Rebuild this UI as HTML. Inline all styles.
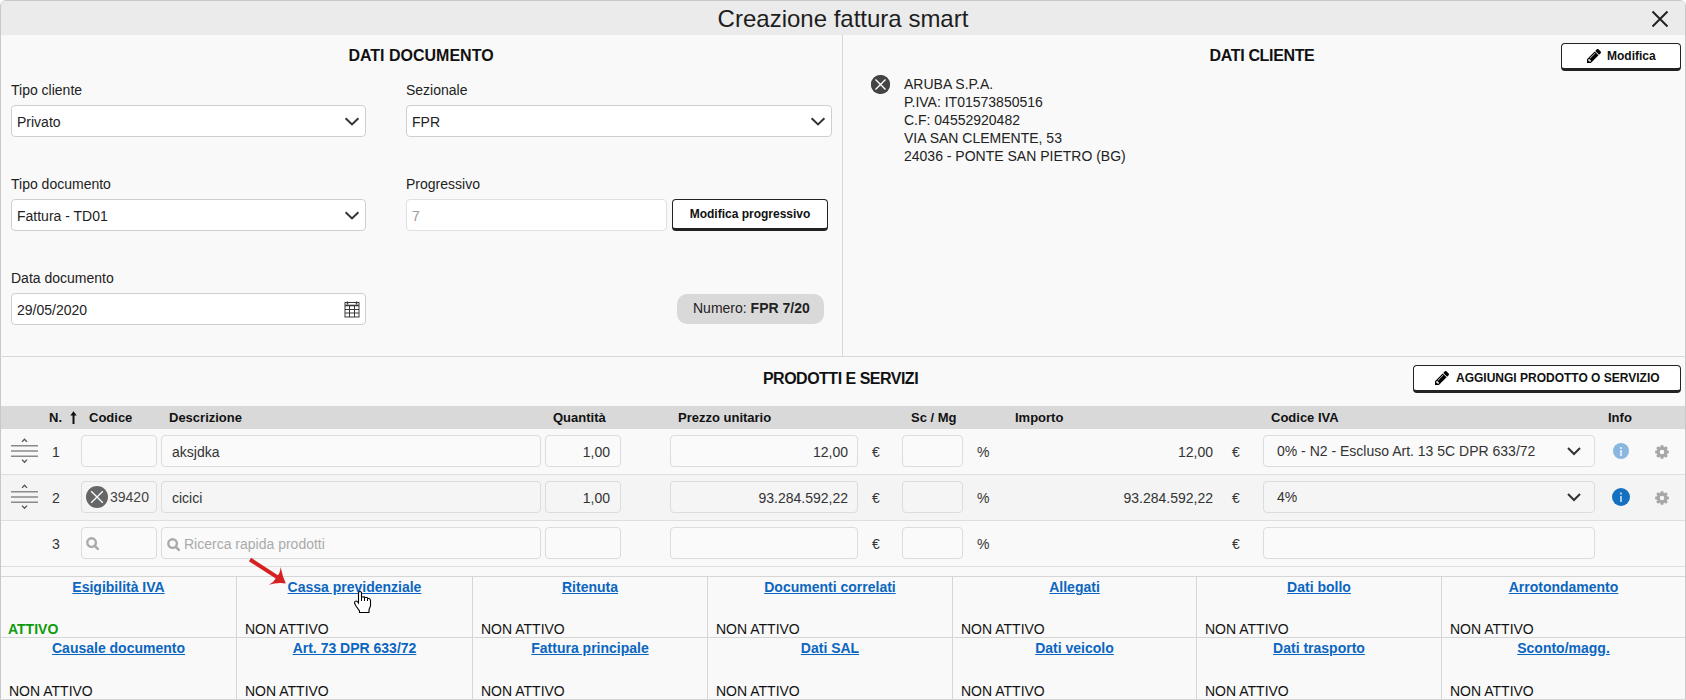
<!DOCTYPE html>
<html><head><meta charset="utf-8">
<style>
*{box-sizing:border-box;margin:0;padding:0}
html,body{width:1686px;height:700px;overflow:hidden;background:#fff;font-family:"Liberation Sans",sans-serif;color:#222}
.a{position:absolute}
#modal{position:absolute;left:0;top:0;width:1686px;height:712px;border:1px solid #c8c8c8;border-radius:6px;background:#f9f9f9;overflow:hidden}
#hdr{position:absolute;left:0;top:0;width:1684px;height:34px;background:#ebebeb}
.t14{font-size:14px;line-height:16px;white-space:nowrap}
.lbl{position:absolute;font-size:14px;line-height:16px;color:#222;white-space:nowrap}
.inp{position:absolute;height:32px;background:#fff;border:1px solid #cfcfcf;border-radius:4px}
.h16{position:absolute;font-size:16px;line-height:18px;font-weight:bold;color:#111;white-space:nowrap}
.chev{position:absolute;width:16px;height:10px}
.btn{position:absolute;background:#fff;border:1px solid #222;border-bottom:3px solid #222;border-radius:4px;font-weight:bold;font-size:12px;color:#111;text-align:center;white-space:nowrap}
.lk{text-align:center;font-weight:bold;color:#0b66c0;text-decoration:underline}
</style></head><body>
<div id="modal"><div id="hdr"></div></div>
<!-- title -->
<div class="a" style="left:0;top:5px;width:1686px;text-align:center;font-size:24px;line-height:28px;color:#1e1e1e">Creazione fattura smart</div>
<!-- close X -->
<svg class="a" style="left:1650px;top:9px" width="20" height="20" viewBox="0 0 20 20"><path d="M2.5 2.5L17.5 17.5M17.5 2.5L2.5 17.5" stroke="#222" stroke-width="2" fill="none"/></svg>

<!-- vertical divider -->
<div class="a" style="left:842px;top:35px;width:1px;height:321px;background:#d8d8d8"></div>
<div class="a" style="left:0;top:356px;width:1686px;height:1px;background:#d8d8d8"></div>

<!-- DATI DOCUMENTO -->
<div class="h16" style="left:0;width:842px;text-align:center;top:47px">DATI DOCUMENTO</div>
<div class="lbl" style="left:11px;top:82px">Tipo cliente</div>
<div class="inp" style="left:11px;top:105px;width:355px"></div>
<div class="lbl" style="left:17px;top:114px">Privato</div>
<div class="lbl" style="left:406px;top:82px">Sezionale</div>
<div class="inp" style="left:406px;top:105px;width:426px"></div>
<div class="lbl" style="left:412px;top:114px">FPR</div>

<div class="lbl" style="left:11px;top:176px">Tipo documento</div>
<div class="inp" style="left:11px;top:199px;width:355px"></div>
<div class="lbl" style="left:17px;top:208px">Fattura - TD01</div>
<div class="lbl" style="left:406px;top:176px">Progressivo</div>
<div class="inp" style="left:406px;top:199px;width:261px;border-color:#e0e0e0"></div>
<div class="lbl" style="left:412px;top:208px;color:#999">7</div>
<div class="btn" style="left:672px;top:199px;width:156px;height:32px;line-height:28px">Modifica progressivo</div>

<div class="lbl" style="left:11px;top:270px">Data documento</div>
<div class="inp" style="left:11px;top:293px;width:355px"></div>
<div class="lbl" style="left:17px;top:302px">29/05/2020</div>
<div class="a" style="left:677px;top:294px;width:147px;height:30px;background:#d9d9d9;border-radius:10px"></div>
<div class="lbl" style="left:693px;top:300px">Numero: <b>FPR 7/20</b></div>

<!-- DATI CLIENTE -->
<div class="h16" style="left:843px;width:838px;text-align:center;top:47px;letter-spacing:-0.35px">DATI CLIENTE</div>
<div class="btn" style="left:1561px;top:43px;width:120px;height:28px;line-height:24px;text-align:left;padding-left:45px">Modifica</div>
<div class="a" style="left:871px;top:75px;width:19px;height:19px;border-radius:50%;background:#444"></div>
<div class="lbl" style="left:904px;top:75px;line-height:18px">ARUBA S.P.A.<br>P.IVA: IT01573850516<br>C.F: 04552920482<br>VIA SAN CLEMENTE, 53<br>24036 - PONTE SAN PIETRO (BG)</div>

<!-- PRODOTTI E SERVIZI -->
<div class="h16" style="left:0;width:1681px;text-align:center;top:370px;letter-spacing:-0.5px">PRODOTTI E SERVIZI</div>
<div class="btn" style="left:1413px;top:365px;width:268px;height:28px;line-height:24px;text-align:left;padding-left:42px">AGGIUNGI PRODOTTO O SERVIZIO</div>
<div class="a" style="left:1px;top:406px;width:1684px;height:23px;background:#d9d9d9"></div>

<div class="lbl" style="left:49px;top:410px;font-size:13px;font-weight:bold;color:#111">N.</div>
<div class="lbl" style="left:89px;top:410px;font-size:13px;font-weight:bold;color:#111">Codice</div>
<div class="lbl" style="left:169px;top:410px;font-size:13px;font-weight:bold;color:#111">Descrizione</div>
<div class="lbl" style="left:553px;top:410px;font-size:13px;font-weight:bold;color:#111">Quantit&agrave;</div>
<div class="lbl" style="left:678px;top:410px;font-size:13px;font-weight:bold;color:#111">Prezzo unitario</div>
<div class="lbl" style="left:911px;top:410px;font-size:13px;font-weight:bold;color:#111">Sc / Mg</div>
<div class="lbl" style="left:1015px;top:410px;font-size:13px;font-weight:bold;color:#111">Importo</div>
<div class="lbl" style="left:1271px;top:410px;font-size:13px;font-weight:bold;color:#111">Codice IVA</div>
<div class="lbl" style="left:1608px;top:410px;font-size:13px;font-weight:bold;color:#111">Info</div>
<svg class="a" style="left:70px;top:411px" width="7" height="13" viewBox="0 0 7 13"><path d="M3.5 3V13" stroke="#111" stroke-width="2"/><path d="M0.3 4.5L3.5 0.3L6.7 4.5Z" fill="#111"/></svg>
<div class="a" style="left:1px;top:429px;width:1684px;height:46px;background:#f9f9f9"></div>
<div class="a" style="left:1px;top:474px;width:1684px;height:1px;background:#dedede"></div>
<svg class="a" style="left:11px;top:438px" width="28" height="26" viewBox="0 0 28 26"><path d="M0 7.65H27M0 12.9H27M0 18.15H27" stroke="#8a8a8a" stroke-width="1.5"/><path d="M11 3.9L13.5 1.2L16 3.9M11 21.6L13.5 24.3L16 21.6" stroke="#555" stroke-width="1.3" fill="none"/></svg>
<div class="lbl" style="left:52px;top:444px;color:#333;">1</div>
<div class="inp" style="left:81px;top:435px;width:76px;background:#fafafa;border-color:#dcdcdc"></div>
<div class="inp" style="left:161px;top:435px;width:380px;background:#fafafa;border-color:#dcdcdc"></div>
<div class="inp" style="left:545px;top:435px;width:76px;background:#fafafa;border-color:#dcdcdc"></div>
<div class="inp" style="left:670px;top:435px;width:188px;background:#fafafa;border-color:#dcdcdc"></div>
<div class="lbl" style="left:872px;top:444px;color:#333;">&euro;</div>
<div class="inp" style="left:902px;top:435px;width:61px;background:#fafafa;border-color:#dcdcdc"></div>
<div class="lbl" style="left:977px;top:444px;color:#333;">%</div>
<div class="lbl" style="left:1232px;top:444px;color:#333;">&euro;</div>
<div class="inp" style="left:1263px;top:435px;width:332px;background:#fafafa;border-color:#dcdcdc"></div>
<div class="a" style="left:1px;top:475px;width:1684px;height:46px;background:#f4f4f4"></div>
<div class="a" style="left:1px;top:520px;width:1684px;height:1px;background:#dedede"></div>
<svg class="a" style="left:11px;top:484px" width="28" height="26" viewBox="0 0 28 26"><path d="M0 7.65H27M0 12.9H27M0 18.15H27" stroke="#8a8a8a" stroke-width="1.5"/><path d="M11 3.9L13.5 1.2L16 3.9M11 21.6L13.5 24.3L16 21.6" stroke="#555" stroke-width="1.3" fill="none"/></svg>
<div class="lbl" style="left:52px;top:490px;color:#333;">2</div>
<div class="inp" style="left:81px;top:481px;width:76px;background:#f5f5f5;border-color:#dcdcdc"></div>
<div class="inp" style="left:161px;top:481px;width:380px;background:#f5f5f5;border-color:#dcdcdc"></div>
<div class="inp" style="left:545px;top:481px;width:76px;background:#f5f5f5;border-color:#dcdcdc"></div>
<div class="inp" style="left:670px;top:481px;width:188px;background:#f5f5f5;border-color:#dcdcdc"></div>
<div class="lbl" style="left:872px;top:490px;color:#333;">&euro;</div>
<div class="inp" style="left:902px;top:481px;width:61px;background:#f5f5f5;border-color:#dcdcdc"></div>
<div class="lbl" style="left:977px;top:490px;color:#333;">%</div>
<div class="lbl" style="left:1232px;top:490px;color:#333;">&euro;</div>
<div class="inp" style="left:1263px;top:481px;width:332px;background:#f5f5f5;border-color:#dcdcdc"></div>
<div class="a" style="left:1px;top:521px;width:1684px;height:46px;background:#f9f9f9"></div>
<div class="a" style="left:1px;top:566px;width:1684px;height:1px;background:#dedede"></div>
<div class="lbl" style="left:52px;top:536px;color:#333;">3</div>
<div class="inp" style="left:81px;top:527px;width:76px;background:#fafafa;border-color:#dcdcdc"></div>
<div class="inp" style="left:161px;top:527px;width:380px;background:#fafafa;border-color:#dcdcdc"></div>
<div class="inp" style="left:545px;top:527px;width:76px;background:#fafafa;border-color:#dcdcdc"></div>
<div class="inp" style="left:670px;top:527px;width:188px;background:#fafafa;border-color:#dcdcdc"></div>
<div class="lbl" style="left:872px;top:536px;color:#333;">&euro;</div>
<div class="inp" style="left:902px;top:527px;width:61px;background:#fafafa;border-color:#dcdcdc"></div>
<div class="lbl" style="left:977px;top:536px;color:#333;">%</div>
<div class="lbl" style="left:1232px;top:536px;color:#333;">&euro;</div>
<div class="inp" style="left:1263px;top:527px;width:332px;background:#fafafa;border-color:#dcdcdc"></div>
<div class="lbl" style="left:310px;width:300px;text-align:right;top:444px;color:#333">1,00</div>
<div class="lbl" style="left:548px;width:300px;text-align:right;top:444px;color:#333">12,00</div>
<div class="lbl" style="left:913px;width:300px;text-align:right;top:444px;color:#333">12,00</div>
<div class="lbl" style="left:172px;top:444px;color:#333;">aksjdka</div>
<div class="lbl" style="left:1277px;top:443px;color:#333;">0% - N2 - Escluso Art. 13 5C DPR 633/72</div>
<div class="lbl" style="left:310px;width:300px;text-align:right;top:490px;color:#333">1,00</div>
<div class="lbl" style="left:548px;width:300px;text-align:right;top:490px;color:#333">93.284.592,22</div>
<div class="lbl" style="left:913px;width:300px;text-align:right;top:490px;color:#333">93.284.592,22</div>
<div class="lbl" style="left:172px;top:490px;color:#333;">cicici</div>
<div class="lbl" style="left:1277px;top:489px;color:#333;">4%</div>
<div class="lbl" style="left:110px;top:489px;color:#444;">39420</div>
<div class="lbl" style="left:184px;top:536px;color:#aaa;">Ricerca rapida prodotti</div>
<svg class="a" style="left:1567px;top:447px" width="14" height="9" viewBox="0 0 14 9"><path d="M1 1L7 7L13 1" stroke="#333" stroke-width="2" fill="none"/></svg>
<svg class="a" style="left:1567px;top:493px" width="14" height="9" viewBox="0 0 14 9"><path d="M1 1L7 7L13 1" stroke="#333" stroke-width="2" fill="none"/></svg>
<svg class="a" style="left:86px;top:486px" width="22" height="22" viewBox="0 0 22 22"><circle cx="11" cy="11" r="11" fill="#666"/><path d="M5.2 5.2L16.8 16.8M16.8 5.2L5.2 16.8" stroke="#fff" stroke-width="1.3"/></svg>
<svg class="a" style="left:86px;top:537px" width="14" height="14" viewBox="0 0 14 14"><circle cx="5.6" cy="5.6" r="4.3" stroke="#aaa" stroke-width="2.4" fill="none"/><path d="M8.8 8.8L11.8 11.8" stroke="#aaa" stroke-width="2.6" stroke-linecap="round"/></svg>
<svg class="a" style="left:167px;top:538px" width="14" height="14" viewBox="0 0 14 14"><circle cx="5.6" cy="5.6" r="4.3" stroke="#aaa" stroke-width="2.4" fill="none"/><path d="M8.8 8.8L11.8 11.8" stroke="#aaa" stroke-width="2.6" stroke-linecap="round"/></svg>
<svg class="a" style="left:1613px;top:443px" width="16" height="16" viewBox="0 0 16 16"><circle cx="8" cy="8" r="8" fill="#8ab7df"/><rect x="7" y="7" width="2" height="6" fill="#d9e8f5"/><rect x="7" y="4" width="2" height="2" fill="#d9e8f5"/></svg>
<svg class="a" style="left:1612px;top:488px" width="18" height="18" viewBox="0 0 18 18"><circle cx="9" cy="9" r="9" fill="#1570bf"/><rect x="8" y="8" width="2" height="6" fill="#a8cbe9"/><rect x="8" y="4.5" width="2" height="2" fill="#a8cbe9"/></svg>
<svg class="a" style="left:1655px;top:445px" width="14" height="14" viewBox="0 0 14 14"><path fill="#a6a6a6" fill-rule="evenodd" d="M5.01 2.20 L5.33 2.08 L5.66 0.13 L8.34 0.13 L8.67 2.08 L8.99 2.20 L9.30 2.34 L10.91 1.19 L12.81 3.09 L11.66 4.70 L11.80 5.01 L11.92 5.33 L13.87 5.66 L13.87 8.34 L11.92 8.67 L11.80 8.99 L11.66 9.30 L12.81 10.91 L10.91 12.81 L9.30 11.66 L8.99 11.80 L8.67 11.92 L8.34 13.87 L5.66 13.87 L5.33 11.92 L5.01 11.80 L4.70 11.66 L3.09 12.81 L1.19 10.91 L2.34 9.30 L2.20 8.99 L2.08 8.67 L0.13 8.34 L0.13 5.66 L2.08 5.33 L2.20 5.01 L2.34 4.70 L1.19 3.09 L3.09 1.19 L4.70 2.34Z M9.30 7 A2.3 2.3 0 1 0 4.70 7 A2.3 2.3 0 1 0 9.30 7Z"/></svg>
<svg class="a" style="left:1655px;top:491px" width="14" height="14" viewBox="0 0 14 14"><path fill="#a6a6a6" fill-rule="evenodd" d="M5.01 2.20 L5.33 2.08 L5.66 0.13 L8.34 0.13 L8.67 2.08 L8.99 2.20 L9.30 2.34 L10.91 1.19 L12.81 3.09 L11.66 4.70 L11.80 5.01 L11.92 5.33 L13.87 5.66 L13.87 8.34 L11.92 8.67 L11.80 8.99 L11.66 9.30 L12.81 10.91 L10.91 12.81 L9.30 11.66 L8.99 11.80 L8.67 11.92 L8.34 13.87 L5.66 13.87 L5.33 11.92 L5.01 11.80 L4.70 11.66 L3.09 12.81 L1.19 10.91 L2.34 9.30 L2.20 8.99 L2.08 8.67 L0.13 8.34 L0.13 5.66 L2.08 5.33 L2.20 5.01 L2.34 4.70 L1.19 3.09 L3.09 1.19 L4.70 2.34Z M9.30 7 A2.3 2.3 0 1 0 4.70 7 A2.3 2.3 0 1 0 9.30 7Z"/></svg>
<div class="a" style="left:1px;top:566px;width:1684px;height:1px;background:#dedede"></div>
<div class="a" style="left:1px;top:576px;width:1684px;height:1px;background:#d6d6d6"></div>
<div class="a" style="left:1px;top:637px;width:1684px;height:1px;background:#d6d6d6"></div>
<div class="a" style="left:236px;top:577px;width:1px;height:130px;background:#d6d6d6"></div>
<div class="a" style="left:472px;top:577px;width:1px;height:130px;background:#d6d6d6"></div>
<div class="a" style="left:707px;top:577px;width:1px;height:130px;background:#d6d6d6"></div>
<div class="a" style="left:952px;top:577px;width:1px;height:130px;background:#d6d6d6"></div>
<div class="a" style="left:1196px;top:577px;width:1px;height:130px;background:#d6d6d6"></div>
<div class="a" style="left:1441px;top:577px;width:1px;height:130px;background:#d6d6d6"></div>
<div class="lbl lk" style="left:1px;width:235px;top:579px">Esigibilit&agrave; IVA</div>
<div class="lbl lk" style="left:1px;width:235px;top:640px">Causale documento</div>
<div class="lbl" style="left:8px;top:621px;color:#111"><span style="color:#0e9a0e;font-weight:bold">ATTIVO</span></div>
<div class="lbl" style="left:9px;top:683px;color:#111">NON ATTIVO</div>
<div class="lbl lk" style="left:237px;width:235px;top:579px">Cassa previdenziale</div>
<div class="lbl lk" style="left:237px;width:235px;top:640px">Art. 73 DPR 633/72</div>
<div class="lbl" style="left:245px;top:621px;color:#111">NON ATTIVO</div>
<div class="lbl" style="left:245px;top:683px;color:#111">NON ATTIVO</div>
<div class="lbl lk" style="left:473px;width:234px;top:579px">Ritenuta</div>
<div class="lbl lk" style="left:473px;width:234px;top:640px">Fattura principale</div>
<div class="lbl" style="left:481px;top:621px;color:#111">NON ATTIVO</div>
<div class="lbl" style="left:481px;top:683px;color:#111">NON ATTIVO</div>
<div class="lbl lk" style="left:708px;width:244px;top:579px">Documenti correlati</div>
<div class="lbl lk" style="left:708px;width:244px;top:640px">Dati SAL</div>
<div class="lbl" style="left:716px;top:621px;color:#111">NON ATTIVO</div>
<div class="lbl" style="left:716px;top:683px;color:#111">NON ATTIVO</div>
<div class="lbl lk" style="left:953px;width:243px;top:579px">Allegati</div>
<div class="lbl lk" style="left:953px;width:243px;top:640px">Dati veicolo</div>
<div class="lbl" style="left:961px;top:621px;color:#111">NON ATTIVO</div>
<div class="lbl" style="left:961px;top:683px;color:#111">NON ATTIVO</div>
<div class="lbl lk" style="left:1197px;width:244px;top:579px">Dati bollo</div>
<div class="lbl lk" style="left:1197px;width:244px;top:640px">Dati trasporto</div>
<div class="lbl" style="left:1205px;top:621px;color:#111">NON ATTIVO</div>
<div class="lbl" style="left:1205px;top:683px;color:#111">NON ATTIVO</div>
<div class="lbl lk" style="left:1442px;width:243px;top:579px">Arrotondamento</div>
<div class="lbl lk" style="left:1442px;width:243px;top:640px">Sconto/magg.</div>
<div class="lbl" style="left:1450px;top:621px;color:#111">NON ATTIVO</div>
<div class="lbl" style="left:1450px;top:683px;color:#111">NON ATTIVO</div>
<svg class="a" style="left:240px;top:550px" width="60" height="45" viewBox="240 550 60 45"><path d="M251.1 557.8L277.9 575.2Q280.3 572.5 280.6 566.9Q282.4 575.8 285.8 583.5Q277.4 582.2 268.9 584.8Q273.8 582.3 275.7 578.6L248.9 561.2Z" fill="#d42222"/></svg>
<svg class="a" style="left:353px;top:590px" width="20" height="25" viewBox="-1 -1 20 25"><path d="M4.5 1.5Q6 -0.5 7.5 1.5V6H9.5Q10.5 5.5 11 6.5H12.5Q13.5 6.5 14 7.5H15Q16.5 8 16.5 9.5V15L15 18.5V21.5H5.5V20L2 15L0.5 12Q0.5 10 2 10Q3 10 4.5 12Z" fill="#fff" stroke="#000" stroke-width="1.1"/><path d="M7.5 6V10M10.5 6.5V10M13.5 7.5V10" stroke="#000" stroke-width="1"/></svg>
<svg class="a" style="left:344px;top:116.5px" width="16" height="9" viewBox="0 0 16 9"><path d="M1.6 1.3L8 7.4L14.4 1.3" stroke="#333" stroke-width="2" fill="none"/></svg>
<svg class="a" style="left:344px;top:210.5px" width="16" height="9" viewBox="0 0 16 9"><path d="M1.6 1.3L8 7.4L14.4 1.3" stroke="#333" stroke-width="2" fill="none"/></svg>
<svg class="a" style="left:810px;top:116.5px" width="16" height="9" viewBox="0 0 16 9"><path d="M1.6 1.3L8 7.4L14.4 1.3" stroke="#333" stroke-width="2" fill="none"/></svg>
<svg class="a" style="left:344px;top:301px" width="16" height="17" viewBox="0 0 16 17"><rect x="1" y="1.5" width="14" height="14.5" stroke="#3a3a3a" stroke-width="1" fill="none"/><path d="M1 4.5H15" stroke="#3a3a3a" stroke-width="1.6"/><path d="M5.5 5V16M10.5 5V16M1 8.5H15M1 12H15" stroke="#3a3a3a" stroke-width="1"/><path d="M3.5 0.5V3.5M12.5 0.5V3.5" stroke="#3a3a3a" stroke-width="1.5"/></svg>
<svg class="a" style="left:871px;top:75px" width="19" height="19" viewBox="0 0 19 19"><circle cx="9.5" cy="9.5" r="9.5" fill="#444"/><path d="M4.5 4.5L14.5 14.5M14.5 4.5L4.5 14.5" stroke="#fff" stroke-width="1.4"/></svg>
<svg class="a" style="left:1587px;top:49px" width="14" height="14" viewBox="0 149 1515 1515"><path fill="#000" d="M363 1536l91-91-235-235-91 91v107h128v128h107zm523-928q0-22-22-22-10 0-17 7l-542 542q-7 7-7 17 0 22 22 22 10 0 17-7l542-542q7-7 7-17zm-54-192l416 416-832 832h-416v-416zm683 96q0 53-37 90l-166 166-416-416 166-165q36-38 90-38 53 0 91 38l235 234q37 39 37 91z"/></svg>
<svg class="a" style="left:1435px;top:371px" width="14" height="14" viewBox="0 149 1515 1515"><path fill="#000" d="M363 1536l91-91-235-235-91 91v107h128v128h107zm523-928q0-22-22-22-10 0-17 7l-542 542q-7 7-7 17 0 22 22 22 10 0 17-7l542-542q7-7 7-17zm-54-192l416 416-832 832h-416v-416zm683 96q0 53-37 90l-166 166-416-416 166-165q36-38 90-38 53 0 91 38l235 234q37 39 37 91z"/></svg>
<div class="a" style="left:0;top:699px;width:1686px;height:1px;background:#d6d6d6"></div>
</body></html>
